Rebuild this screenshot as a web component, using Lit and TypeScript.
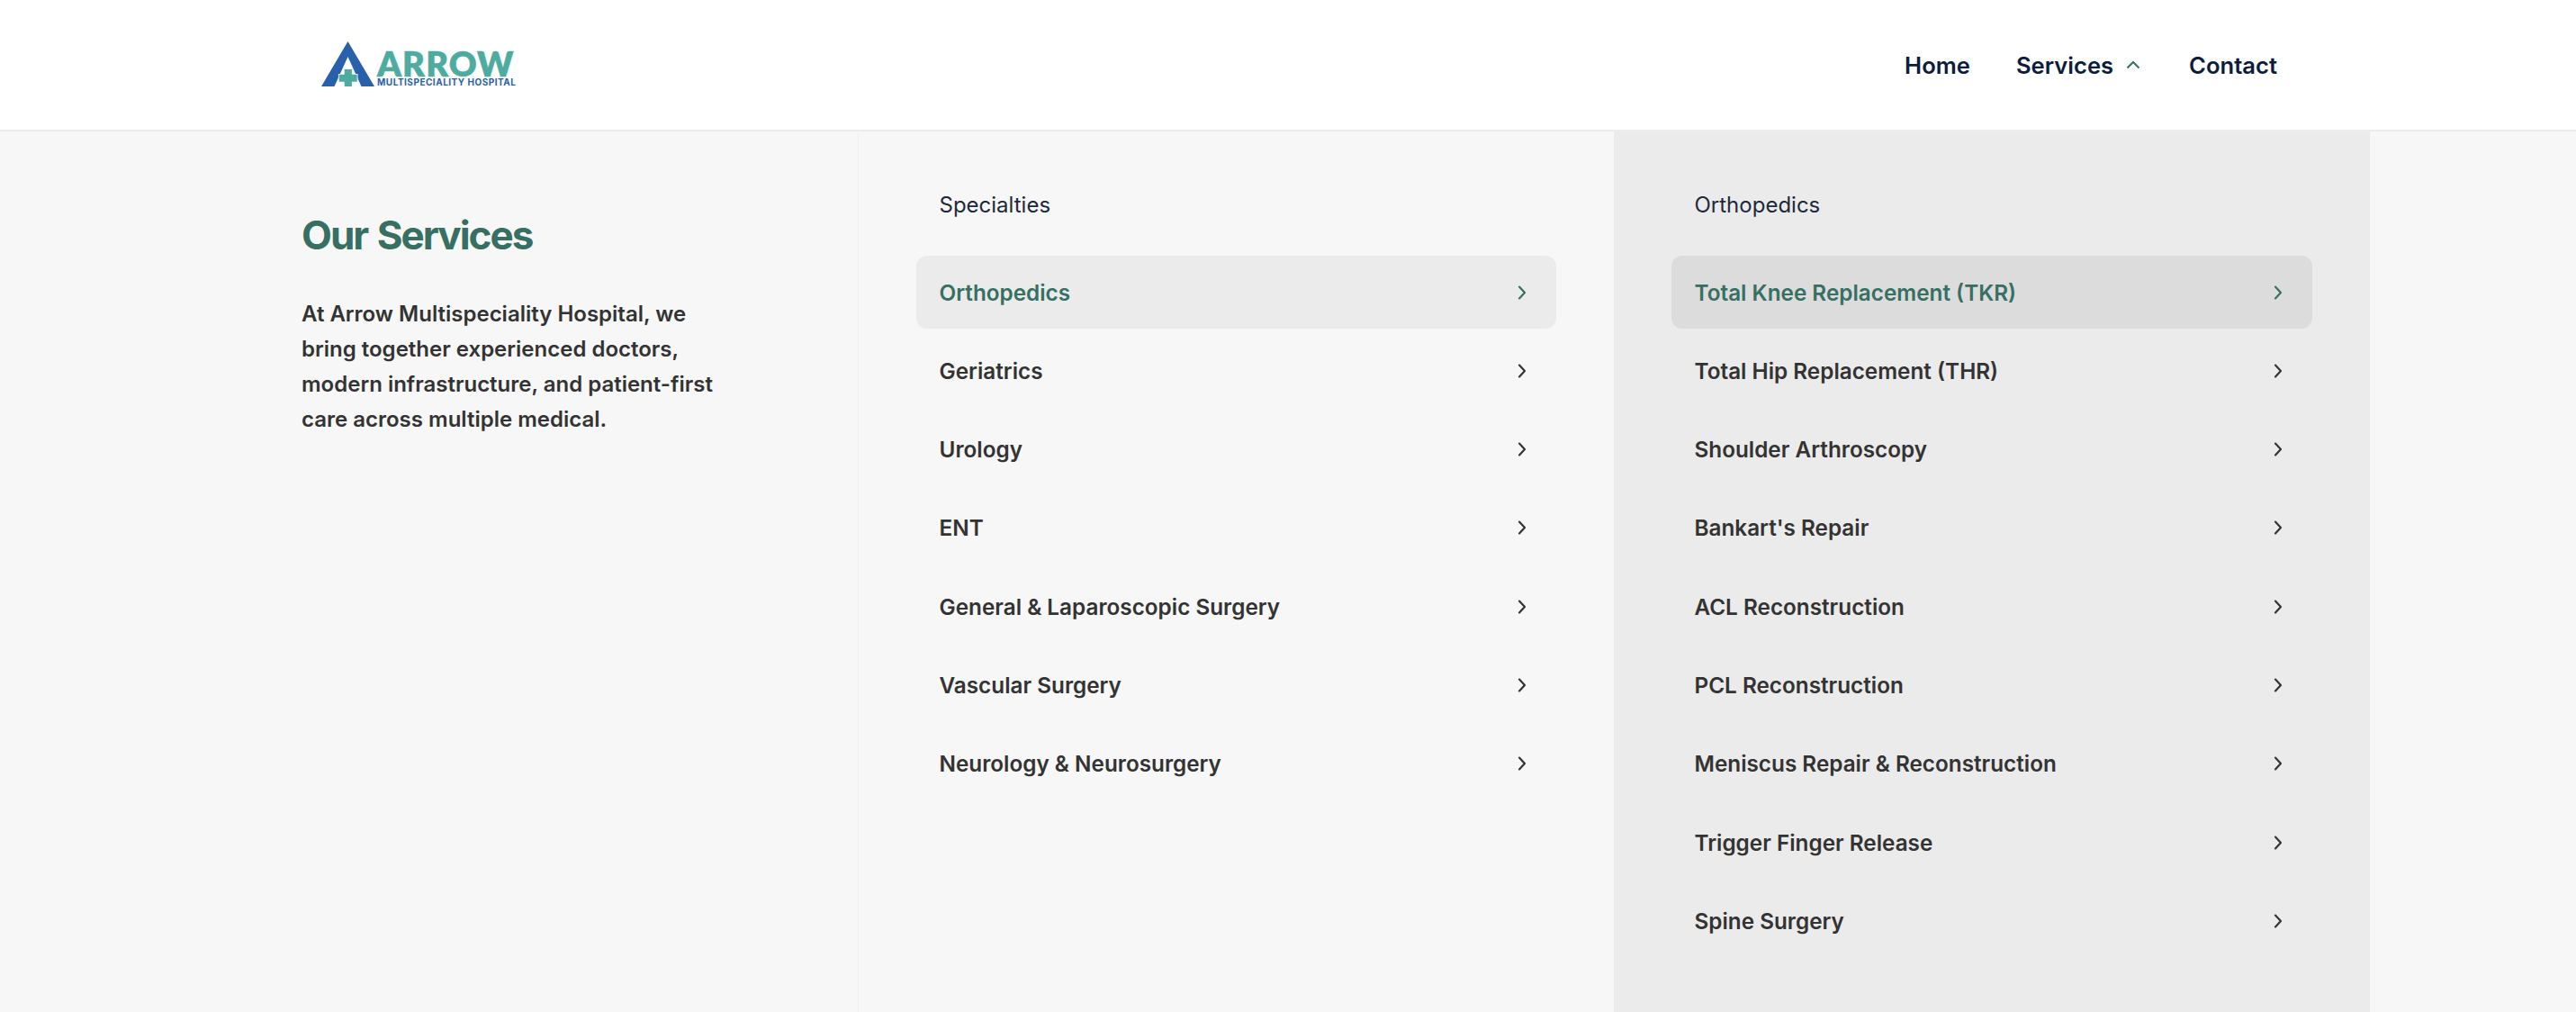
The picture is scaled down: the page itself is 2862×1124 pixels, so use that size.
import { LitElement, html, css, svg } from "lit";
import { customElement } from "lit/decorators.js";

const chevron = svg`<path d="M6 2.6 L12 9 L6 15.4" fill="none" stroke="currentColor" stroke-width="2.2" stroke-linecap="round" stroke-linejoin="round"/>`;

const specialties = ["Orthopedics","Geriatrics","Urology","ENT","General & Laparoscopic Surgery","Vascular Surgery","Neurology & Neurosurgery"];
const procedures = ["Total Knee Replacement (TKR)","Total Hip Replacement (THR)","Shoulder Arthroscopy","Bankart's Repair","ACL Reconstruction","PCL Reconstruction","Meniscus Repair & Reconstruction","Trigger Finger Release","Spine Surgery"];

@customElement("app-root")
export class AppRoot extends LitElement {
  static styles = css`
    :host { display: flex; flex-direction: column; min-height: 100vh; background: #f7f7f7; font-family: Inter, "Liberation Sans", sans-serif; color: #333; overflow: hidden; }
    header { height: 144px; flex: none; box-sizing: content-box; background: #fff; border-bottom: 2px solid #ececec; display: flex; align-items: center; justify-content: space-between; padding: 0 332px 0 357px; }
    .logo { display: flex; align-items: flex-end; margin-top: -1px; }
    .mark { width: 60px; height: 51px; display: block; }
    .word { display: flex; flex-direction: column; margin-left: 2px; }
    .arrow { font-family: Lato, sans-serif; font-weight: 800; font-size: 38px; line-height: 31px; height: 31px; color: #4dac9f; letter-spacing: 1.1px; -webkit-text-stroke: 0.4px #4dac9f; }
    .sub { font-family: Inter, sans-serif; font-weight: 700; font-size: 10px; line-height: 11px; height: 11px; color: #2860ac; letter-spacing: 0.5px; white-space: nowrap; }
    nav { display: flex; align-items: center; gap: 51px; font-size: 25.6px; font-weight: 600; color: #0c1c3c; }
    nav a { display: flex; align-items: center; gap: 14px; }
    nav a.open { margin-right: 3px; }
    nav svg { width: 16px; height: 10px; color: #376f62; }
    main { flex: 1; display: grid; grid-template-columns: 954px 839px 840px; align-items: stretch; }
    .intro { padding: 87px 0 0 335px; border-right: 1px solid #f0f0f0; box-sizing: border-box; }
    h1 { margin: 0; font-size: 44px; line-height: 56px; font-weight: 700; color: #376f62; letter-spacing: -2px; word-spacing: 2px; }
    .intro p { margin: 40px 0 0; width: 470px; font-size: 24px; line-height: 39px; font-weight: 600; color: #333; }
    .col { padding: 66px 64px 0; display: flex; flex-direction: column; }
    .col.alt { background: #ebebeb; }
    .label { font-size: 24px; line-height: 32px; padding-left: 25.5px; font-weight: 400; color: #1e293b; margin-bottom: 40px; }
    .list { display: flex; flex-direction: column; gap: 6.3px; }
    .row { height: 81px; box-sizing: border-box; padding: 0 25.5px; display: flex; align-items: center; justify-content: space-between; border-radius: 12px; font-size: 24.3px; font-weight: 600; color: #333; }
    .row svg { width: 18px; height: 18px; flex: none; margin-right: 4px; }
    .row.on { background: #ebebeb; color: #376f62; }
    .alt .row.on { background: #dcdcdc; }
  `;
  private list(items: string[]) {
    return html`<div class="list">${items.map((t, i) => html`<div class="row ${i === 0 ? "on" : ""}"><span>${t}</span><svg viewBox="0 0 18 18">${chevron}</svg></div>`)}</div>`;
  }
  render() {
    return html`
      <header>
        <div class="logo">
          <svg class="mark" viewBox="0 0 60 51">
            <path d="M29.5 0 L59 50 L44.5 50 L29.5 17 L14.5 50 L0 50 Z" fill="#2860ac"/>
            <path d="M25.7 31 H33.9 V36.7 H39.7 V44.7 H33.9 V50 H25.7 V44.7 H19.7 V36.7 H25.7 Z" fill="#4dac9f" stroke="#fff" stroke-width="1.6" paint-order="stroke"/>
          </svg>
          <div class="word"><span class="arrow">ARROW</span><span class="sub">MULTISPECIALITY HOSPITAL</span></div>
        </div>
        <nav>
          <a>Home</a>
          <a class="open">Services <svg viewBox="0 0 16 10"><path d="M1.5 8.5 L8 2 L14.5 8.5" fill="none" stroke="currentColor" stroke-width="2"/></svg></a>
          <a>Contact</a>
        </nav>
      </header>
      <main>
        <section class="intro">
          <h1>Our Services</h1>
          <p>At Arrow Multispeciality Hospital, we bring together experienced doctors, modern infrastructure, and patient-first care across multiple medical.</p>
        </section>
        <section class="col">
          <div class="label">Specialties</div>
          ${this.list(specialties)}
        </section>
        <section class="col alt">
          <div class="label">Orthopedics</div>
          ${this.list(procedures)}
        </section>
      </main>
    `;
  }
}
